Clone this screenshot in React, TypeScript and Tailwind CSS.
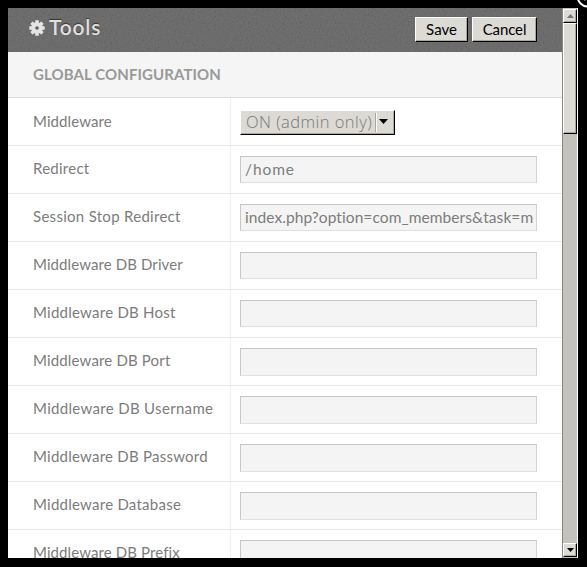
const labels = [
  { text: "Middleware", fit: "tracking-[0.1px]", line: "leading-[47px]" },
  { text: "Redirect", fit: "tracking-[0.25px]", line: "leading-[45px]" },
  { text: "Session Stop Redirect", fit: "tracking-[0.29px]", line: "leading-[45px]" },
  { text: "Middleware DB Driver", fit: "tracking-[0.1px]", line: "leading-[45px]" },
  { text: "Middleware DB Host", fit: "tracking-[0.25px]", line: "leading-[45px]" },
  { text: "Middleware DB Port", fit: "tracking-[0.16px]", line: "leading-[45px]" },
  { text: "Middleware DB Username", fit: "tracking-[0.32px]", line: "leading-[45px]" },
  { text: "Middleware DB Password", fit: "tracking-[0.24px]", line: "leading-[45px]" },
  { text: "Middleware Database", fit: "tracking-[0.25px]", line: "leading-[45px]" },
  { text: "Middleware DB Prefix", fit: "tracking-[0.1px]", line: "leading-[45px]" },
];

const raised =
  "border border-t-white border-l-white border-r-black border-b-black bg-[#dcdad5] shadow-[inset_-1px_-1px_0_#aca899]";

function Gear() {
  return (
    <svg width="16" height="16" viewBox="0 0 16 16" className="block shrink-0">
      <g fill="#e4e4e4">
        <circle cx="8" cy="8" r="5.8" />
        {[0, 45, 90, 135].map((a) => (
          <rect key={a} x="6.2" y="0.3" width="3.6" height="15.4" rx="0.5" transform={`rotate(${a} 8 8)`} />
        ))}
      </g>
      <circle cx="8" cy="8" r="1.8" fill="#606060" />
    </svg>
  );
}

function Grain() {
  return (
    <svg width="554" height="44" className="absolute inset-0 opacity-[0.06]">
      <filter id="grain">
        <feTurbulence type="fractalNoise" baseFrequency="0.6" numOctaves="2" stitchTiles="stitch" />
        <feColorMatrix values="1.6 0 0 0 -0.35  1.6 0 0 0 -0.35  1.6 0 0 0 -0.35  0 0 0 0 1" />
      </filter>
      <rect width="554" height="44" filter="url(#grain)" />
    </svg>
  );
}

function Field({ index }: { index: number }) {
  if (index === 0) {
    return (
      <div className={`mt-[12px] flex h-[25px] w-[155px] items-center ${raised}`}>
        <span className="w-[134px] pb-[2px] pl-[5px] font-['Open_Sans',sans-serif] text-[16.500px] font-light leading-[21px] tracking-[0.45px] whitespace-nowrap text-[#777]">
          ON (admin only)
        </span>
        <span className="h-[19px] w-[2px] border-l border-[#aca899] bg-white" />
        <svg width="9" height="5" viewBox="0 0 9 5" className="ml-[2px] mb-[2px]">
          <path d="M0 0h9L4.500 5z" fill="#000" />
        </svg>
      </div>
    );
  }
  return (
    <div className={`mt-[10px] ${index < 5 ? "h-[27px]" : "h-[28px]"} w-[297px] overflow-hidden border border-t-[#c4c4c4] border-r-[#d2d2d2] border-b-[#e0e0e0] border-l-[#c8c8c8] bg-[#f4f4f4] pl-[4px] text-[15.500px] leading-[25px] whitespace-nowrap text-[#7c7c7c]`}>
      {index === 1 && <span className="tracking-[0.900px]">/home</span>}
      {index === 2 && <span className="tracking-[0.08px]">index.php?option=com_members&amp;task=m</span>}
    </div>
  );
}

export default function App() {
  return (
    <div className="relative h-[567px] w-[587px] overflow-hidden bg-black pt-[8px] pl-[8px] font-['Lato',sans-serif]">
      <div className="flex h-[550px] w-[570px] overflow-hidden bg-white">
        <main className="h-full w-[554px] overflow-hidden">
          <header className="relative flex h-[44px] items-start bg-[#686868] pl-[21px]">
            <Grain />
            <div className="relative mt-[12px]"><Gear /></div>
            <h1 className="relative mt-[5px] ml-[4px] w-[366px] shrink-0 text-[21px] leading-[28px] font-semibold tracking-[0.8px] text-[#e0e0e0] [text-shadow:0_-1px_1px_#333]">
              Tools
            </h1>
            <button className={`relative mt-[9px] h-[25px] w-[53px] shrink-0 text-[15px] leading-[23px] text-black ${raised}`}>Save</button>
            <button className={`relative mt-[9px] ml-[4px] h-[25px] w-[65px] shrink-0 text-[15px] leading-[23px] tracking-[-0.1px] text-black ${raised}`}>Cancel</button>
          </header>
          <h2 className="h-[46px] border-b border-[#dcdcdc] bg-[#f5f5f5] pl-[25px] text-[15px] leading-[45px] font-bold tracking-[0.1px] text-[#999]">
            GLOBAL CONFIGURATION
          </h2>
          {labels.map((label, i) => (
            <div key={label.text} className="flex h-[48px] border-b border-[#e8e8e8]">
              <div className={`w-[223px] border-r border-[#f0f0f0] pl-[25px] text-[15px] whitespace-nowrap text-[#7c7c7c] ${label.line}`}>
                <span className={label.fit}>{label.text}</span>
              </div>
              <div className="pl-[9px]">
                <Field index={i} />
              </div>
            </div>
          ))}
        </main>
        <aside className="flex h-full w-[16px] flex-col border-r border-l border-r-white border-l-[#8a887e] bg-[#c4c2bd] pt-[1px]">
          <div className={`flex h-[14px] items-center justify-center ${raised}`}>
            <svg width="7" height="4" viewBox="0 0 7 4"><path d="M0 4h7L3.500 0z" fill="#77756f" /></svg>
          </div>
          <div className={`h-[111px] ${raised}`} />
          <div className={`mt-auto mb-[1px] flex h-[14px] items-center justify-center ${raised}`}>
            <svg width="7" height="4" viewBox="0 0 7 4"><path d="M0 0h7L3.500 4z" fill="#000" /></svg>
          </div>
        </aside>
      </div>
      <svg width="24" height="24" viewBox="0 0 24 24" className="absolute top-[-16px] left-[576px]">
        <circle cx="12" cy="12" r="10.500" fill="#000" stroke="#fff" strokeWidth="2" />
        <path d="M8 8l8 8M16 8l-8 8" stroke="#fff" strokeWidth="2" />
      </svg>
    </div>
  );
}
